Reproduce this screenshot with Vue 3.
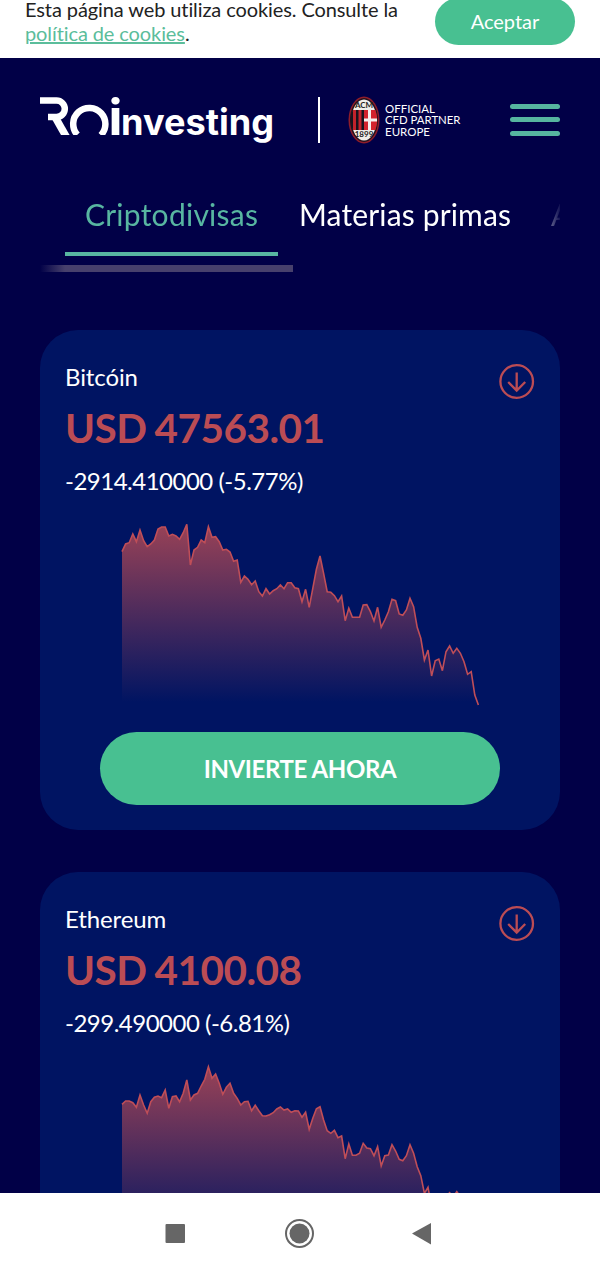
<template>
  <div class="screen">
    <div class="cookies">
      <p class="cookies-text">
        Esta página web utiliza cookies. Consulte la<br />
        <a class="cookies-link">política de cookies</a>.
      </p>
      <button class="accept">Aceptar</button>
    </div>

    <main class="page">
      <header class="header">
        <svg class="logo" width="236" height="52" viewBox="0 0 236 52">
          <clipPath id="baseline"><rect width="110" height="40" /></clipPath>
          <g fill="none" stroke="#fff" stroke-width="6.500" clip-path="url(#baseline)">
            <path d="M0 5.500H16.500a8.300 8.300 0 0 1 0 16.600H8" />
            <path d="M14.500 21L27 43" stroke-width="7.500" />
            <circle cx="49.300" cy="29" r="16.100" stroke-dasharray="74.200 27" transform="rotate(138 49.300 29)" />
          </g>
          <text class="logo-i" x="68.500" y="40" textLength="14" lengthAdjust="spacingAndGlyphs">i</text>
          <text class="logo-text" x="81" y="40" textLength="153" lengthAdjust="spacingAndGlyphs">nvesting</text>
        </svg>
        <span class="divider"></span>
        <div class="partner">
          <svg width="32" height="48" viewBox="0 0 32 48">
            <ellipse cx="16" cy="24" rx="15.500" ry="23.500" fill="#8e1c2a" />
            <ellipse cx="16" cy="24" rx="14" ry="22" fill="#24121c" />
            <ellipse cx="16" cy="24" rx="12.500" ry="20.500" fill="#f0eee9" />
            <path d="M4.500 14H27.500Q31 24 27.500 34H4.500Q1 24 4.500 14Z" fill="#17131d" />
            <path d="M5 14h3v20H5zM10.500 14h3v20h-3z" fill="#c2222b" />
            <path d="M16 14H27.500Q31 24 27.500 34H16Z" fill="#d3222d" />
            <path d="M20 14h3v20h-3zM16 22.500h13v3H16z" fill="#f5eeee" />
            <text class="crest-text" x="16" y="12" text-anchor="middle">ACM</text>
            <text class="crest-text" x="16" y="41" text-anchor="middle">1899</text>
          </svg>
          <svg width="78" height="36" viewBox="0 0 78 36">
            <text class="partner-text" x="0" y="10.700" textLength="50" lengthAdjust="spacingAndGlyphs">OFFICIAL</text>
            <text class="partner-text" x="0" y="22.200" textLength="75.500" lengthAdjust="spacingAndGlyphs">CFD PARTNER</text>
            <text class="partner-text" x="0" y="33.700" textLength="45" lengthAdjust="spacingAndGlyphs">EUROPE</text>
          </svg>
        </div>
        <div class="burger"><i></i><i></i><i></i></div>
      </header>

      <nav class="tabs">
        <a class="tab active">Criptodivisas</a>
        <a class="tab">Materias primas</a>
        <a class="tab">Acciones</a>
      </nav>
      <div class="scrollbar"></div>

      <section v-for="coin in coins" :key="coin.id" class="card">
        <div class="card-head">
          <h2 class="name">{{ coin.name }}</h2>
          <svg class="arrow" width="36" height="36" viewBox="0 0 36 36">
            <circle cx="17.700" cy="18.500" r="16.300" />
            <path d="M17.700 9.500V27M9.200 19L17.700 27.500L26.200 19" />
          </svg>
        </div>
        <div class="price">{{ coin.price }}</div>
        <div class="change">{{ coin.change }}</div>
        <svg class="chart" width="360" height="200" viewBox="0 0 360 200">
          <defs>
            <linearGradient :id="coin.id" gradientUnits="userSpaceOnUse" x1="0" y1="14" x2="0" y2="192">
              <stop offset="0" stop-color="#bb4c54" stop-opacity="0.82" />
              <stop offset="1" stop-color="#bb4c54" stop-opacity="0" />
            </linearGradient>
          </defs>
          <path :d="area(coin.values)" :fill="`url(#${coin.id})`" />
          <path class="line" :d="line(coin.values)" />
        </svg>
        <button class="invest">INVIERTE AHORA</button>
      </section>
    </main>

    <footer class="system-bar">
      <svg width="600" height="80" viewBox="0 0 600 80" fill="#666">
        <rect x="165.500" y="31" width="19.500" height="19" rx="1" />
        <circle cx="299.500" cy="40.500" r="10" />
        <circle cx="299.500" cy="40.500" r="13.500" fill="none" stroke="#666" stroke-width="2" />
        <path d="M412 40.500L431 30V51.500Z" />
      </svg>
    </footer>
  </div>
</template>

<script setup>
const coins = [
  {
    id: "bitcoin",
    name: "Bitcóin",
    price: "USD 47563.01",
    change: "-2914.410000 (-5.77%)",
    values: [
      125, 102, 98, 72, 95, 60, 92, 110, 102, 90, 57, 51, 51, 78, 73, 78, 88,
      68, 43, 165, 120, 112, 90, 98, 50, 82, 80, 95, 120, 118, 126, 154, 150,
      217, 198, 208, 224, 213, 245, 258, 236, 252, 242, 236, 225, 236, 218,
      218, 233, 236, 275, 238, 292, 235, 178, 138, 190, 245, 247, 257, 275,
      258, 332, 295, 322, 322, 322, 285, 284, 305, 333, 292, 352, 330, 305,
      268, 272, 312, 316, 300, 265, 290, 352, 385, 450, 420, 498, 452, 447,
      482, 425, 408, 430, 415, 430, 455, 493, 485, 555, 585,
    ],
  },
  {
    id: "ethereum",
    name: "Ethereum",
    price: "USD 4100.08",
    change: "-299.490000 (-6.81%)",
    values: [
      157, 147, 147, 152, 166, 129, 159, 184, 149, 136, 132, 137, 114, 169,
      134, 132, 149, 124, 84, 144, 129, 124, 102, 82, 44, 79, 66, 94, 127, 106,
      94, 124, 139, 159, 149, 148, 176, 160, 176, 191, 192, 188, 182, 171, 165,
      174, 171, 181, 176, 177, 196, 181, 232, 199, 170, 164, 204, 236, 244,
      235, 257, 252, 320, 276, 310, 310, 304, 274, 288, 290, 311, 284, 342,
      311, 309, 278, 297, 322, 326, 311, 278, 304, 344, 371, 424, 406, 464,
      444, 439, 449, 434, 422, 434, 419, 434, 450, 480, 475, 540, 570,
    ],
  },
];

const step = 3.6; // px between two quotes

// values are stored in thirds of a pixel from the top of the chart
const line = (values) =>
  "M" + values.map((v, i) => `${(2 + i * step).toFixed(1)} ${(v / 3).toFixed(1)}`).join("L");

const area = (values) =>
  `${line(values)}L${(2 + (values.length - 1) * step).toFixed(1)} 195L2 195Z`;
</script>

<style>
body {
  margin: 0;
}
</style>

<style scoped>
.screen {
  display: flex;
  flex-direction: column;
  width: 600px;
  height: 1273px;
  overflow: hidden;
  font-family: Lato, sans-serif;
  font-variant-ligatures: none;
  background: #010047;
}

.cookies {
  display: flex;
  flex: none;
  justify-content: space-between;
  align-items: flex-start;
  box-sizing: border-box;
  height: 58px;
  padding: 0 25px;
  background: #fff;
}

.cookies-text {
  margin: -2px 0 0;
  font-size: 20px;
  line-height: 23.5px;
  letter-spacing: -0.1px;
  white-space: nowrap;
  color: #222;
}

.cookies-link {
  color: #5bbd9b;
  text-decoration: underline;
}

button {
  border: 0;
  padding: 0;
  font-family: inherit;
  color: #fff;
  background: #48c091;
}

.accept {
  width: 140px;
  height: 47px;
  margin-top: -2px;
  padding-bottom: 2px;
  border-radius: 24px;
  font-size: 20px;
}

.page {
  flex: 1;
  min-height: 0;
  padding: 0 40px;
  overflow: hidden;
}

.header {
  display: flex;
  align-items: center;
  height: 124px;
}

.logo {
  flex: none;
  margin-top: 2px;
}

.logo text {
  font-family: Inter, sans-serif;
  font-weight: 700;
  fill: #fff;
}

.logo .logo-i {
  font-size: 50px;
}

.logo .logo-text {
  font-size: 36px;
}

.divider {
  width: 2px;
  height: 46px;
  margin-left: 42px;
  background: #fff;
}

.partner {
  display: flex;
  align-items: center;
  gap: 5px;
  margin-left: 28px;
}

.partner-text {
  font-family: Lato, sans-serif;
  font-size: 11.5px;
  fill: #fff;
}

.crest-text {
  font-family: Lato, sans-serif;
  font-size: 8px;
  font-weight: 700;
  fill: #222;
}

.burger {
  display: flex;
  flex-direction: column;
  gap: 8.5px;
  width: 50px;
  margin: 0 0 1px auto;
}

.burger i {
  height: 5px;
  border-radius: 3px;
  background: #56b5a0;
}

.tabs {
  display: flex;
  height: 74px;
  padding-left: 25px;
  overflow: hidden;
  mask-image: linear-gradient(90deg, #000 492px, transparent 522px);
}

.tab {
  flex: none;
  box-sizing: border-box;
  height: 74px;
  padding: 14px 20px 0;
  font-size: 30px;
  line-height: 36px;
  letter-spacing: 0.15px;
  color: #fff;
}

.active {
  width: 213px;
  margin-right: 1px;
  border-bottom: 4px solid #58b6a1;
  color: #58b6a1;
  letter-spacing: 0.25px;
}

.scrollbar {
  width: 253px;
  height: 7px;
  margin-top: 9px;
  background: linear-gradient(90deg, transparent, #47406c 25px);
}

.card {
  box-sizing: border-box;
  height: 500px;
  margin-bottom: 42px;
  padding: 33px 25px 0;
  border-radius: 38px;
  background: #001462;
}

.scrollbar + .card {
  margin-top: 58px;
}

.card-head {
  display: flex;
  justify-content: space-between;
}

.name {
  margin: 0;
  font-size: 24px;
  font-weight: 400;
  line-height: 28px;
  letter-spacing: -0.1px;
  color: #fff;
}

.arrow {
  fill: none;
  stroke: #bb4c54;
  stroke-width: 2.3;
}

.price {
  height: 50px;
  margin-top: 4px;
  font-size: 40.5px;
  font-weight: 700;
  line-height: 50px;
  letter-spacing: -0.5px;
  word-spacing: -1.5px;
  color: #bb4c54;
}

.change {
  margin-top: 13px;
  font-size: 24px;
  line-height: 30px;
  letter-spacing: -0.5px;
  color: #fff;
}

.chart {
  display: block;
  margin: 14px auto 22px 55px;
}

.line {
  fill: none;
  stroke: #bf4e58;
  stroke-width: 1.6;
}

.invest {
  display: block;
  width: 400px;
  height: 73px;
  margin: 0 auto;
  border-radius: 37px;
  font-size: 24px;
  font-weight: 700;
  letter-spacing: -0.4px;
}

.system-bar {
  flex: none;
  height: 80px;
  background: #fff;
}
</style>
